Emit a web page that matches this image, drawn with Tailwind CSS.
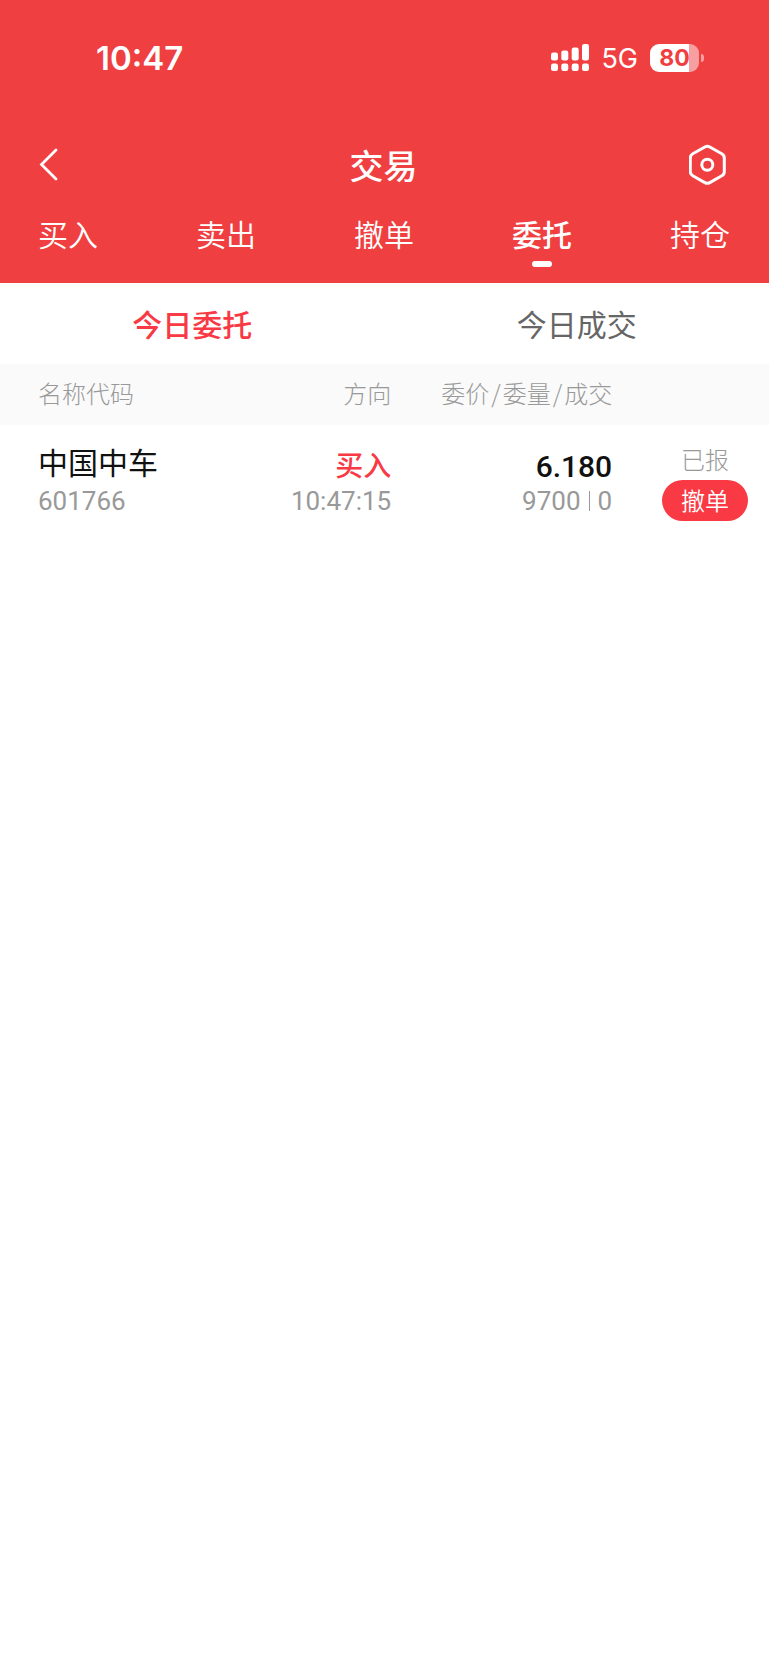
<!DOCTYPE html>
<html lang="zh-CN">
<head>
<meta charset="utf-8">
<meta name="viewport" content="width=device-width, initial-scale=1">
<title>交易</title>
<script src="https://cdn.jsdelivr.net/npm/@tailwindcss/browser@4"></script>
</head>
<body class="min-h-screen bg-white font-['Noto_Sans_CJK_SC',sans-serif]">
<header class="bg-[#f03f41] text-white">
  <div class="flex h-[116px] items-center justify-between pr-[65px] pl-24 font-['Inter',sans-serif]">
    <time class="text-[33px] leading-10 font-semibold">10:47</time>
    <div class="flex items-center gap-3">
      <svg class="h-7 w-[39px]" viewBox="0 0 39 28" fill="currentColor" aria-label="信号">
        <rect x="1" y="8.500" width="7" height="8" rx="2.2"/><rect x="11.300" y="6.500" width="7" height="10" rx="2.2"/><rect x="21.700" y="3.500" width="7" height="13" rx="2.2"/><rect x="32" y="0" width="7" height="16.500" rx="2.2"/>
        <rect x="1" y="19.500" width="7" height="7.500" rx="2.200"/><rect x="11.300" y="19.500" width="7" height="7.500" rx="2.200"/><rect x="21.700" y="19.500" width="7" height="7.500" rx="2.200"/><rect x="32" y="19.500" width="7" height="7.500" rx="2.200"/>
      </svg>
      <span class="pt-0.5 text-[27px] leading-8">5G</span>
      <div class="flex items-center gap-0.5">
        <div class="flex h-7 w-[49px] items-center justify-center overflow-hidden rounded-[9px] bg-linear-to-r from-white from-80% to-white/50 to-80% text-[23px] leading-7 font-bold text-[#f03f41]">80</div>
        <span class="h-2 w-[3px] rounded-r-full bg-white/50"></span>
      </div>
    </div>
  </div>
  <div class="flex h-[98px] items-center justify-between pr-10 pl-[38px]">
    <button type="button" aria-label="返回" class="flex w-10 justify-start">
      <svg class="h-10 w-5" viewBox="0 0 20 40" fill="none" stroke="currentColor" stroke-width="2.800" stroke-linecap="round" stroke-linejoin="miter"><path d="M18 5 3.500 19.500 18 34"/></svg>
    </button>
    <h1 class="text-[34px] leading-[48px] font-medium">交易</h1>
    <button type="button" aria-label="设置" class="flex w-10 justify-center">
      <svg class="h-11 w-10" viewBox="0 0 40 44" fill="none" stroke="currentColor" stroke-width="3"><path d="M15.800 4Q18.300 2.600 20.800 4L32.800 10.800Q35.300 12.200 35.300 14.900V28.700Q35.300 31.400 32.800 32.800L20.800 39.600Q18.300 41 15.800 39.600L3.800 32.800Q1.300 31.400 1.300 28.700V14.900Q1.300 12.200 3.800 10.800Z"/><circle cx="18.300" cy="21.800" r="5.500"/></svg>
    </button>
  </div>
  <nav class="flex h-[69px] items-start justify-between pr-[39px] pl-[38px] text-[30px] leading-[38px] font-[350]">
    <a href="#buy">买入</a>
    <a href="#sell">卖出</a>
    <a href="#cancel">撤单</a>
    <a href="#orders" aria-current="page" class="flex flex-col items-center gap-[9px] font-medium">委托<span class="h-1.5 w-5 rounded-full bg-white"></span></a>
    <a href="#positions">持仓</a>
  </nav>
</header>
<main>
  <div class="grid h-[81px] grid-cols-2 pb-0.5 text-[30px] leading-10">
    <button type="button" class="font-medium text-[#f93943]">今日委托</button>
    <button type="button" class="text-[#666]">今日成交</button>
  </div>
  <table class="w-full table-fixed">
    <colgroup><col class="w-[28%]"><col class="w-[23%]"><col class="w-[29%]"><col></colgroup>
    <thead class="bg-[#fafafa] text-2xl text-[#999]">
      <tr class="h-[61px]">
        <th scope="col" class="pb-[3px] pl-[38px] text-left font-light">名称代码</th>
        <th scope="col" class="pr-px pb-[3px] text-right font-light">方向</th>
        <th scope="col" class="pr-[3px] pb-[3px] text-right font-light">委价<span class="mx-0.5">/</span>委量<span class="mx-0.5">/</span>成交</th>
        <th scope="col" aria-label="状态"></th>
      </tr>
    </thead>
    <tbody>
      <tr class="align-top">
        <td class="pt-4 pl-[38px]">
          <div class="text-[30px] leading-10 text-[#111]">中国中车</div>
          <div class="font-['Roboto',sans-serif] text-[26px] leading-10 text-[#999]">601766</div>
        </td>
        <td class="pt-[19px] pr-px text-right">
          <div class="text-[28px] leading-10 font-medium text-[#f93943]">买入</div>
          <div class="font-['Roboto',sans-serif] text-[26px] leading-[34px] text-[#999]">10:47:15</div>
        </td>
        <td class="pt-6 pr-[3px] text-right font-['Roboto',sans-serif]">
          <div class="text-[30px] leading-9 font-medium text-[#111]">6.180</div>
          <div class="flex items-center justify-end gap-2 text-[26px] leading-8 text-[#999]"><span>9700</span><span class="h-5 w-px bg-[#999]"></span><span>0</span></div>
        </td>
        <td class="pt-3 pr-[21px]">
          <div class="ml-auto flex w-[86px] flex-col items-center">
            <span class="text-2xl leading-[43px] font-light text-[#999]">已报</span>
            <button type="button" class="h-[41px] w-full rounded-full bg-[#f93943] pb-0.5 text-2xl font-[350] text-white">撤单</button>
          </div>
        </td>
      </tr>
    </tbody>
  </table>
</main>
</body>
</html>
